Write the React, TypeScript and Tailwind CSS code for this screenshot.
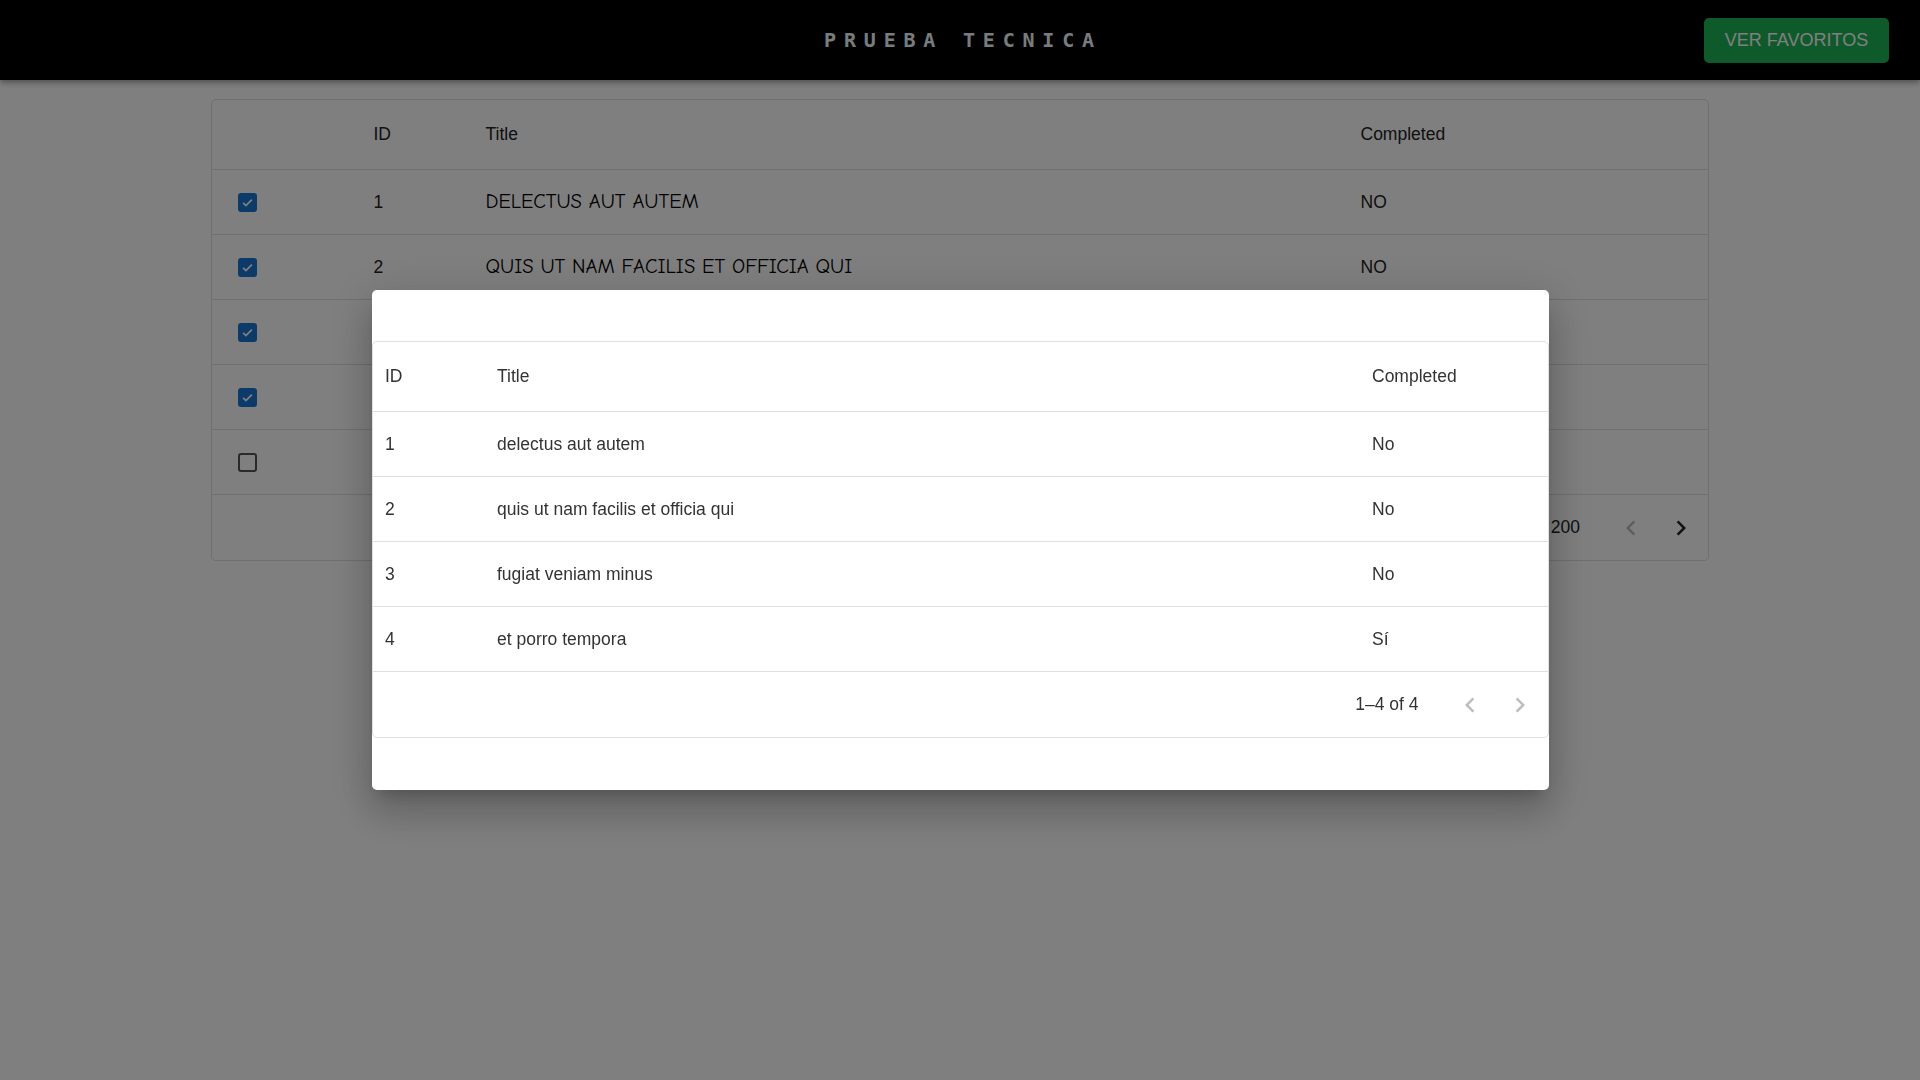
import React from 'react'

type Todo = {
  id: number
  title: string
  completed: boolean
  fav: boolean
}

const todos: Todo[] = [
  { id: 1, title: 'delectus aut autem', completed: false, fav: true },
  { id: 2, title: 'quis ut nam facilis et officia qui', completed: false, fav: true },
  { id: 3, title: 'fugiat veniam minus', completed: false, fav: true },
  { id: 4, title: 'et porro tempora', completed: true, fav: true },
  { id: 5, title: 'laboriosam mollitia et enim quasi adipisci quia provident illum', completed: false, fav: false },
]

const ArrowLeft = ({ className }: { className: string }) => (
  <svg viewBox="0 0 24 24" className={className} fill="currentColor">
    <path d="M15.41 16.59 10.83 12l4.58-4.59L14 6l-6 6 6 6 1.41-1.41z" />
  </svg>
)

const ArrowRight = ({ className }: { className: string }) => (
  <svg viewBox="0 0 24 24" className={className} fill="currentColor">
    <path d="M8.59 16.59 13.17 12 8.59 7.41 10 6l6 6-6 6-1.41-1.41z" />
  </svg>
)

const Check = ({ checked }: { checked: boolean }) =>
  checked ? (
    <div className="w-[19px] h-[19px] rounded-[3px] bg-[#1976d2] flex items-center justify-center">
      <svg viewBox="0 0 24 24" className="w-[15px] h-[15px]" fill="none" stroke="white" strokeWidth="2.8">
        <path d="M5 12.5l4.5 4.5L19 7.5" />
      </svg>
    </div>
  ) : (
    <div className="w-[19px] h-[19px] rounded-[3px] border-2 border-[#555]" />
  )

const Pager = ({ label, nextActive }: { label: string; nextActive: boolean }) => (
  <div className="flex items-center">
    <span className="mr-[26px]">{label}</span>
    <div className="w-[50px] h-[50px] flex items-center justify-center text-[#bdbdbd]">
      <ArrowLeft className="w-[30px] h-[30px]" />
    </div>
    <div className={`w-[50px] h-[50px] flex items-center justify-center ${nextActive ? 'text-[#222]' : 'text-[#bdbdbd]'}`}>
      <ArrowRight className="w-[30px] h-[30px]" />
    </div>
  </div>
)

const App: React.FC = () => {
  return (
    <div className="min-h-screen bg-white text-[17.5px] text-[#222] font-['Liberation_Sans',Arial,sans-serif]">
      {/* Header */}
      <header className="h-[80px] bg-black grid grid-cols-[1fr_auto_1fr] items-center shadow-[0_2px_4px_-1px_rgba(0,0,0,0.2),0_4px_5px_0_rgba(0,0,0,0.14),0_1px_10px_0_rgba(0,0,0,0.12)]">
        <div />
        <h1 className="font-['DejaVu_Sans_Mono',monospace] font-bold text-[20px] tracking-[0.39em] text-[#eef8ff] pl-[6px]">
          PRUEBA TECNICA
        </h1>
        <div className="flex justify-end pr-[31px]">
          <button className="h-[45px] w-[185px] rounded-[5px] bg-[#1eb456] text-white text-[18px] uppercase">
            Ver favoritos
          </button>
        </div>
      </header>

      {/* Main table */}
      <div className="w-[1498px] mx-auto mt-[19px] border border-[#e0e0e0] rounded-[5px]">
        <div className="h-[70px] flex items-center border-b border-[#e0e0e0]">
          <div className="w-[149px]" />
          <div className="w-[112px] pl-[12.5px]">ID</div>
          <div className="w-[875px] pl-[12.5px]">Title</div>
          <div className="flex-1 pl-[12.5px]">Completed</div>
        </div>
        {todos.map((t) => (
          <div key={t.id} className="h-[65px] flex items-center border-b border-[#e0e0e0]">
            <div className="w-[149px] pl-[26px]">
              <Check checked={t.fav} />
            </div>
            <div className="w-[112px] pl-[12.5px]">{t.id}</div>
            <div className="w-[875px] pl-[12.5px] uppercase text-[20.5px] font-medium text-black font-['Comic_Sans_MS','Comic_Neue',cursive] truncate">
              {t.title}
            </div>
            <div className="flex-1 pl-[12.5px] uppercase">{t.completed ? 'Sí' : 'No'}</div>
          </div>
        ))}
        <div className="h-[65px] flex items-center justify-end pr-[2px]">
          <Pager label="1–5 of 200" nextActive />
        </div>
      </div>

      {/* Backdrop + modal */}
      <div className="fixed inset-0 bg-black/50 flex items-center justify-center">
        <div className="w-[1177px] h-[500px] bg-white rounded-[5px] py-[51px] shadow-[0_11px_15px_-7px_rgba(0,0,0,0.2),0_24px_38px_3px_rgba(0,0,0,0.14),0_9px_46px_8px_rgba(0,0,0,0.12)]">
          <div className="border border-[#e0e0e0] rounded-[5px] text-[#333]">
            <div className="h-[70px] flex items-center border-b border-[#e0e0e0]">
              <div className="w-[112px] pl-[12.5px]">ID</div>
              <div className="flex-1 pl-[12.5px]">Title</div>
              <div className="w-[188px] pl-[12.5px]">Completed</div>
            </div>
            {todos
              .filter((t) => t.fav)
              .map((t) => (
                <div key={t.id} className="h-[65px] flex items-center border-b border-[#e0e0e0]">
                  <div className="w-[112px] pl-[12.5px]">{t.id}</div>
                  <div className="flex-1 pl-[12.5px]">{t.title}</div>
                  <div className="w-[188px] pl-[12.5px]">{t.completed ? 'Sí' : 'No'}</div>
                </div>
              ))}
            <div className="h-[65px] flex items-center justify-end pr-[3px]">
              <Pager label="1–4 of 4" nextActive={false} />
            </div>
          </div>
        </div>
      </div>
    </div>
  )
}

export default App
